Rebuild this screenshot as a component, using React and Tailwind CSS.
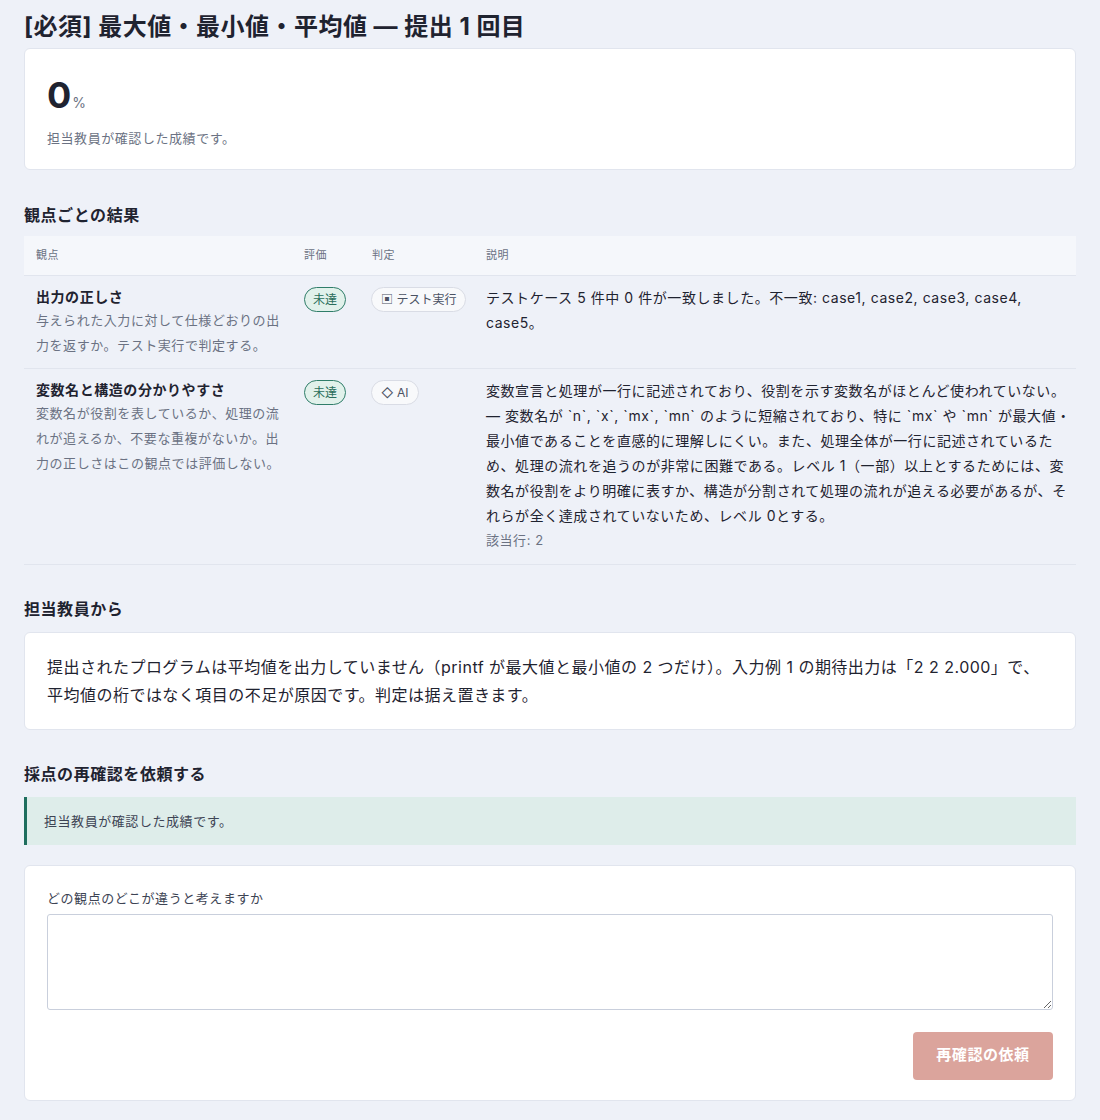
import React from 'react';

const font = { fontFamily: 'Inter, "Noto Sans CJK JP", sans-serif' };

// 観点ごとの結果の行データ
const rows = [
  {
    title: '出力の正しさ',
    desc: '与えられた入力に対して仕様どおりの出力を返すか。テスト実行で判定する。',
    judge: '▣ テスト実行',
    body: 'テストケース 5 件中 0 件が一致しました。不一致: case1, case2, case3, case4, case5。',
  },
  {
    title: '変数名と構造の分かりやすさ',
    desc: '変数名が役割を表しているか、処理の流れが追えるか、不要な重複がないか。出力の正しさはこの観点では評価しない。',
    judge: '◇ AI',
    body: '変数宣言と処理が一行に記述されており、役割を示す変数名がほとんど使われていない。 — 変数名が `n`, `x`, `mx`, `mn` のように短縮されており、特に `mx` や `mn` が最大値・最小値であることを直感的に理解しにくい。また、処理全体が一行に記述されているため、処理の流れを追うのが非常に困難である。レベル 1（一部）以上とするためには、変数名が役割をより明確に表すか、構造が分割されて処理の流れが追える必要があるが、それらが全く達成されていないため、レベル 0とする。',
    lines: '該当行: 2',
  },
];

const App = () => {
  return (
    <div className="min-h-[1120px] bg-[#eef1f8] px-6 pt-[11px] pb-5 tracking-[0.035em] text-[#1f2330]" style={font}>
      <h1 className="text-[24px] font-bold leading-[32px] tracking-[0.02em]">[必須] 最大値・最小値・平均値 — 提出 1 回目</h1>

      {/* スコアカード */}
      <div className="mt-[5px] h-[122px] rounded-md border border-[#e1e5ee] bg-white px-[22px] pt-[24px]">
        <div className="flex items-baseline tracking-normal">
          <span className="text-[36px] font-bold leading-[44px]">0</span>
          <span className="ml-[1px] text-[14px] text-[#6b7283]">%</span>
        </div>
        <p className="mt-[12px] text-[13px] text-[#6b7283]">担当教員が確認した成績です。</p>
      </div>

      {/* 観点ごとの結果 */}
      <h2 className="mt-[34px] text-[16px] font-bold leading-[22px]">観点ごとの結果</h2>
      <table className="mt-[10px] w-full table-fixed border-collapse text-left">
        <thead>
          <tr className="h-[39px] bg-[#f5f7fb] text-[11px] text-[#6b7283]">
            <th className="w-[268px] px-3 font-normal">観点</th>
            <th className="w-[68px] px-3 font-normal">評価</th>
            <th className="w-[114px] px-3 font-normal">判定</th>
            <th className="px-3 font-normal">説明</th>
          </tr>
        </thead>
        <tbody>
          {rows.map((r) => (
            <tr key={r.title} className="border-t border-b border-[#e1e5ee] align-top">
              <td className="pl-3 pr-1 pt-[10px] pb-[10px]">
                <div className="text-[14px] font-bold leading-[22px]">{r.title}</div>
                <div className="text-[13px] leading-[25px] text-[#6b7283]">{r.desc}</div>
              </td>
              <td className="px-3 pt-[10px]">
                <span className="inline-block rounded-full border border-[#2f7d69] bg-[#e1f1eb] px-[8px] text-[12px] leading-[23px] tracking-normal text-[#2a6e5c]">未達</span>
              </td>
              <td className="px-[11px] pt-[10px]">
                <span className="inline-block whitespace-nowrap rounded-full border border-[#d9dce5] bg-[#f8f9fb] px-[9px] text-[12px] leading-[23px] tracking-normal text-[#4b5263]">{r.judge}</span>
              </td>
              <td className="pl-3 pr-1 pt-[9px] pb-[11px]">
                <div className="text-[14px] leading-[25px]">{r.body}</div>
                {r.lines && <div className="text-[13px] leading-[25px] text-[#6b7283]">{r.lines}</div>}
              </td>
            </tr>
          ))}
        </tbody>
      </table>

      {/* 担当教員から */}
      <h2 className="mt-[33px] text-[16px] font-bold leading-[22px]">担当教員から</h2>
      <div className="mt-[12px] rounded-md border border-[#e1e5ee] bg-white px-[22px] pt-[20px] pb-[20px] text-[16px] leading-[28px] tracking-[0.03em]">
        提出されたプログラムは平均値を出力していません（printf が最大値と最小値の 2 つだけ）。入力例 1 の期待出力は「2 2 2.000」で、平均値の桁ではなく項目の不足が原因です。判定は据え置きます。
      </div>

      {/* 採点の再確認 */}
      <h2 className="mt-[33px] text-[16px] font-bold leading-[22px]">採点の再確認を依頼する</h2>
      <div className="mt-[12px] border-l-[3px] border-[#1f6e5e] bg-[#deedea] px-[17px] py-[13px] text-[13px] leading-[22px] text-[#3d4454]">
        担当教員が確認した成績です。
      </div>

      <div className="mt-[20px] rounded-md border border-[#e1e5ee] bg-white px-[22px] pt-[22px] pb-[20px]">
        <label className="block text-[13px] leading-[20px] text-[#3d4454]">どの観点のどこが違うと考えますか</label>
        <textarea className="mt-[6px] block h-[96px] w-full rounded-[3px] border border-[#c9cfdc] bg-white" />
        <div className="mt-[22px] flex justify-end">
          <button className="h-[48px] w-[140px] rounded-[4px] bg-[#dba49c] text-[15px] font-bold text-white">再確認の依頼</button>
        </div>
      </div>
    </div>
  );
};

export default App;
